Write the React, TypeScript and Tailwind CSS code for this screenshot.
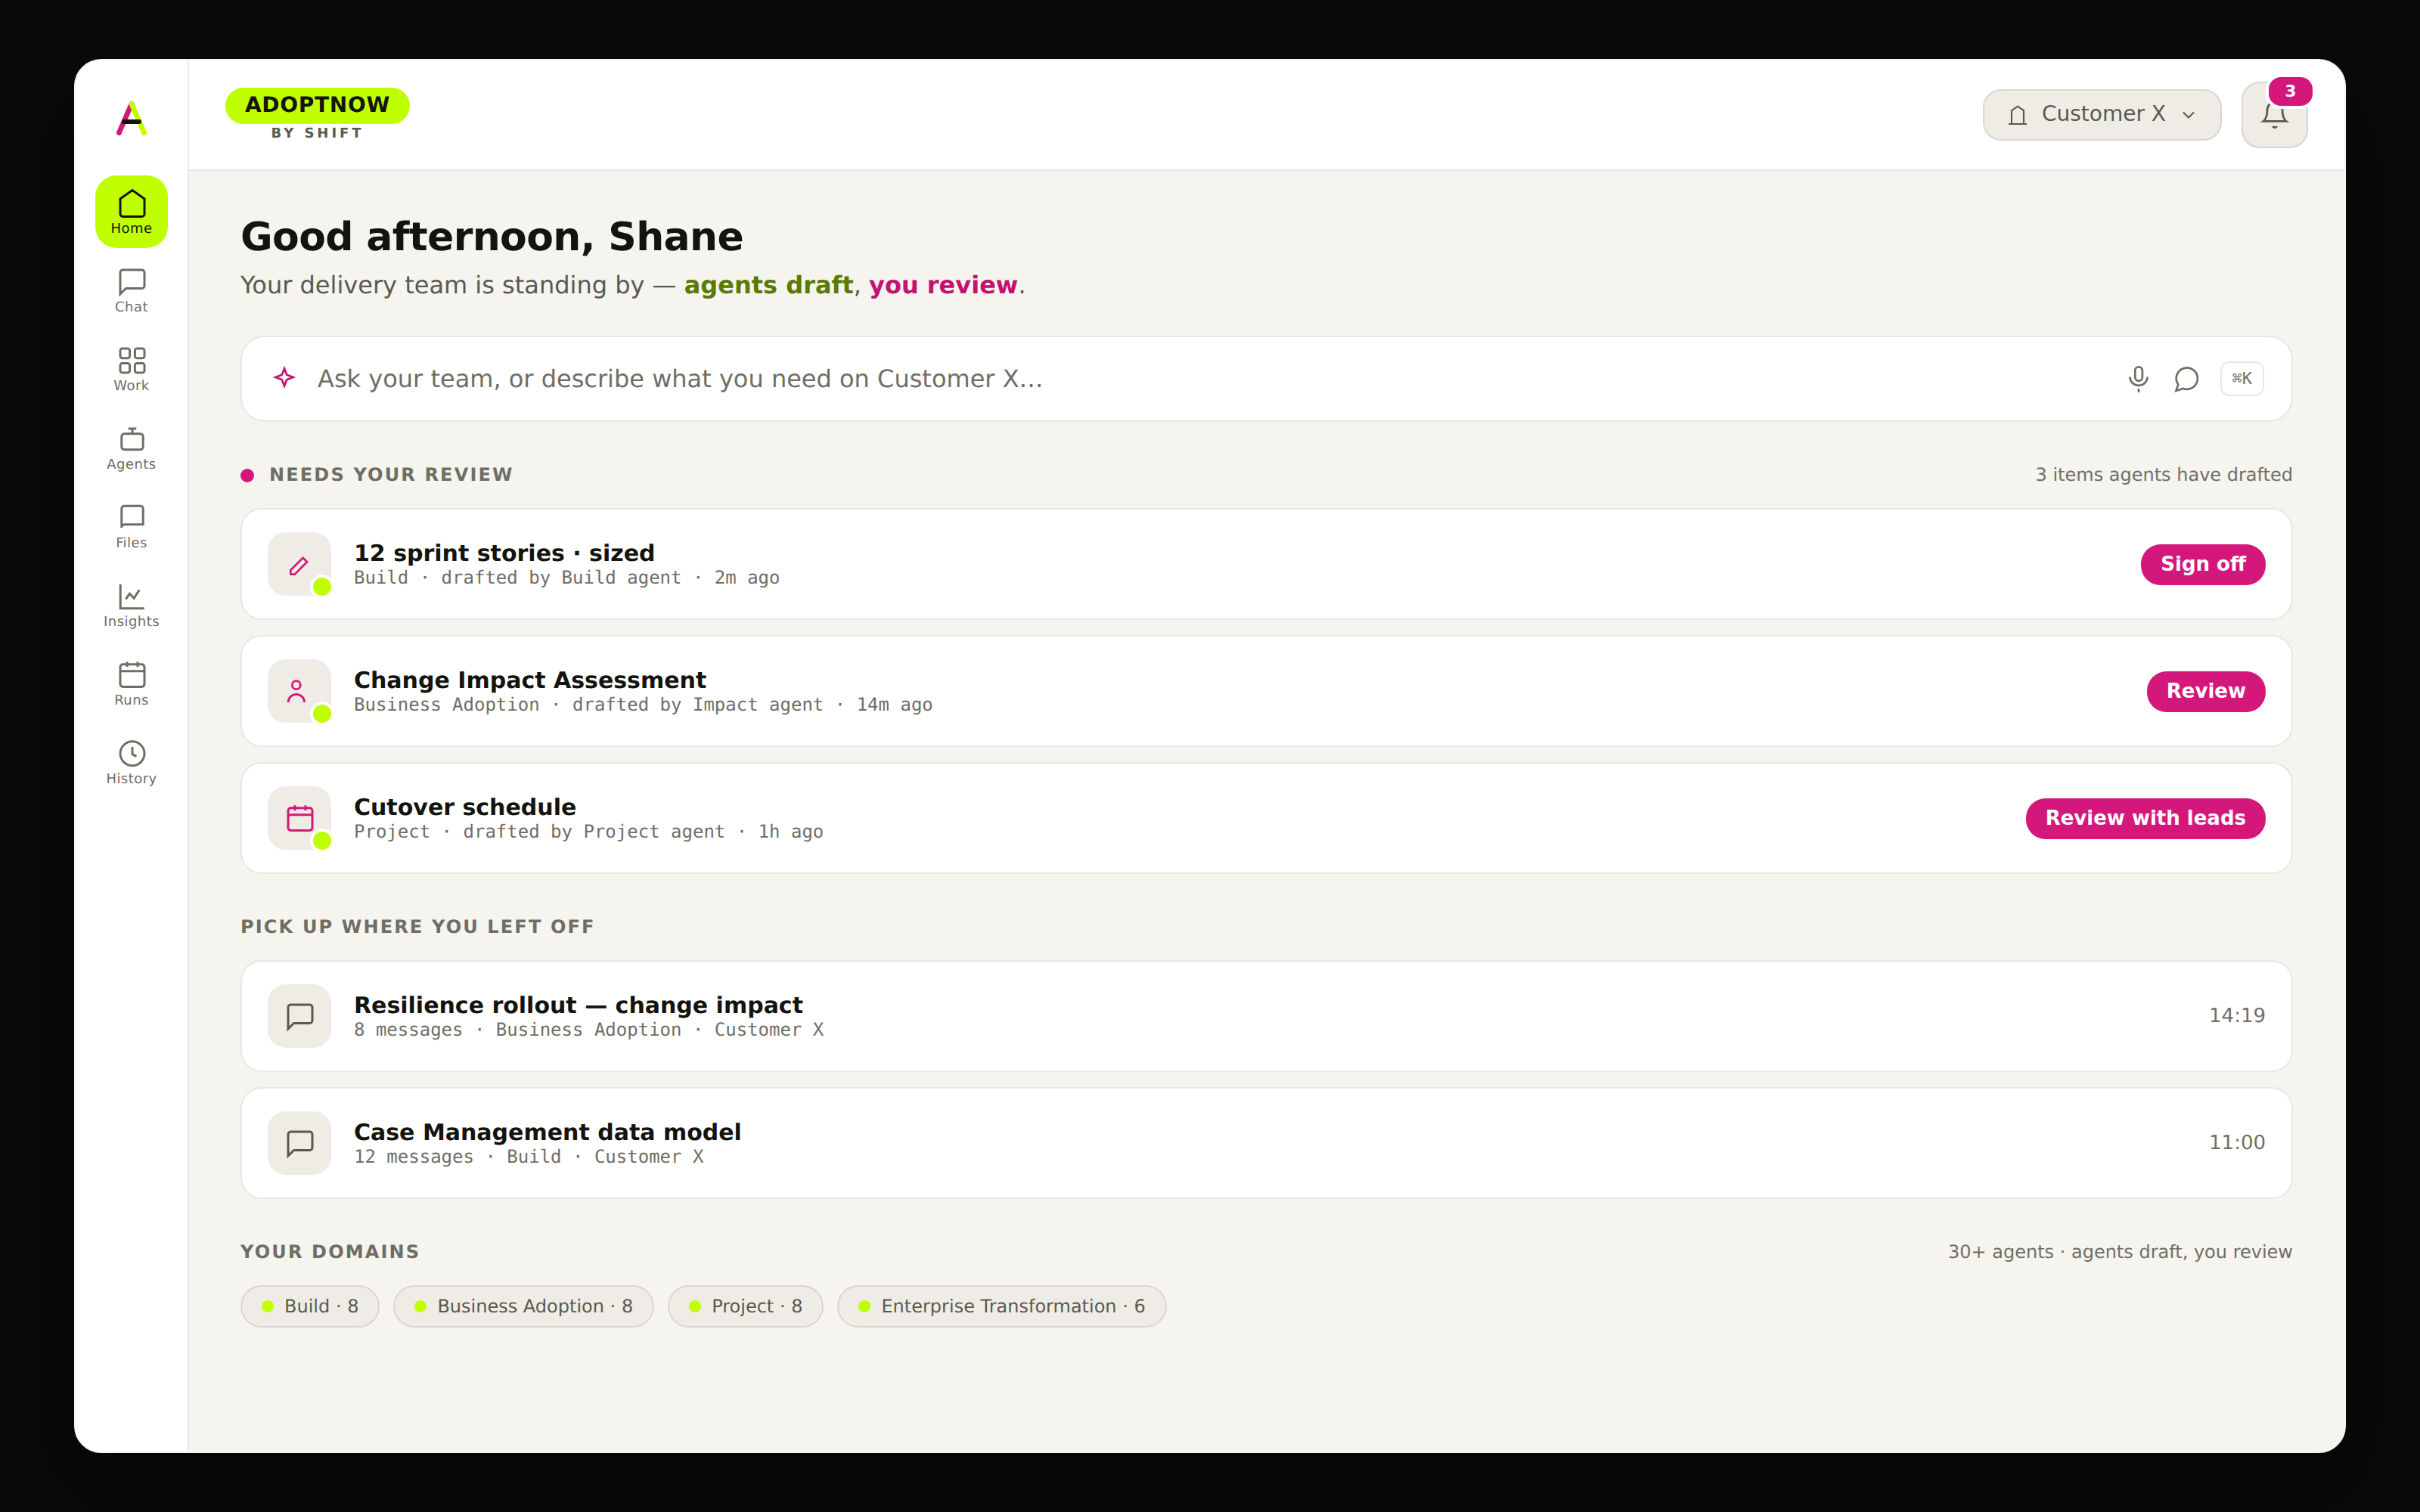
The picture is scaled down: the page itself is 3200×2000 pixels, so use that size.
import type { ReactNode } from "react"

/* ---------- Icons (40px grid) ---------- */

interface IconProps {
  className?: string
  children: ReactNode
}

function Icon({ className = "", children }: IconProps) {
  return (
    <svg
      viewBox="0 0 40 40"
      fill="none"
      stroke="currentColor"
      strokeWidth="3"
      className={`size-10 shrink-0 overflow-visible ${className}`}
    >
      {children}
    </svg>
  )
}

const HomeIcon = () => (
  <Icon>
    <path d="M5 15 21 3.6 37 15v20a3.5 3.5 0 0 1-3.5 3.5h-25A3.5 3.5 0 0 1 5 35z" />
  </Icon>
)

const ChatIcon = () => (
  <Icon>
    <path d="M33.5 29.5h-21L5 37V8.5A3.5 3.5 0 0 1 8.5 5h25A3.5 3.5 0 0 1 37 8.5V26a3.5 3.5 0 0 1-3.5 3.5z" />
  </Icon>
)

const WorkIcon = () => (
  <Icon>
    <rect x="5" y="5.1" width="12.6" height="12.6" rx="2.8" />
    <rect x="24.4" y="5.1" width="12.6" height="12.6" rx="2.8" />
    <rect x="5" y="24.4" width="12.6" height="12.6" rx="2.8" />
    <rect x="24.4" y="24.4" width="12.6" height="12.6" rx="2.8" />
  </Icon>
)

const AgentsIcon = () => (
  <Icon>
    <rect x="6.8" y="13.8" width="28.4" height="21" rx="3.8" />
    <path d="M15.7 7h10.6M21 7v7" />
  </Icon>
)

const FilesIcon = () => (
  <Icon>
    <path d="M6.8 34V8.8a3.6 3.6 0 0 1 3.6-3.6h21.2a3.6 3.6 0 0 1 3.6 3.6v21H11A4.2 4.2 0 0 0 6.8 34z" />
  </Icon>
)

const InsightsIcon = () => (
  <Icon>
    <path d="M5.2 5v31.7h31.5M12.3 24.5l5.2-7.2 5.6 6 7.2-11" />
  </Icon>
)

const CalendarIcon = () => (
  <Icon>
    <rect x="5" y="6.8" width="32" height="29.6" rx="3.6" />
    <path d="M5 15.8h32M14 3.3v7M28 3.3v7" />
  </Icon>
)

const HistoryIcon = () => (
  <Icon>
    <circle cx="21" cy="20.8" r="16" />
    <path d="M21 12v9.6l5.4 3" />
  </Icon>
)

const PencilIcon = () => (
  <Icon>
    <path strokeWidth="2.7" d="M8.3 33.7V28L24.6 11.9l5.5 5.4L13.8 33.7z" />
  </Icon>
)

const PersonIcon = () => (
  <Icon>
    <circle cx="15.8" cy="12.2" r="5.5" strokeWidth="2.8" />
    <path strokeWidth="2.8" d="M5.1 35a10.75 10.6 0 0 1 21.5 0" />
  </Icon>
)

const SparkleIcon = () => (
  <Icon className="text-[#c4106e]">
    <path strokeWidth="2.7" d="M20 6.5l3.2 8.3 8.3 3.2-8.3 3.2L20 29.5l-3.2-8.3L8.5 18l8.3-3.2z" />
  </Icon>
)

const MicIcon = () => (
  <Icon>
    <rect x="15.3" y="4.4" width="9.6" height="18.4" rx="4.7" strokeWidth="2.7" />
    <path strokeWidth="2.7" d="M8.3 17.6a11.7 11.2 0 0 0 23.4 0M20 33v5" />
  </Icon>
)

const BubbleIcon = () => (
  <Icon>
    <path strokeWidth="2.7" d="M5.4 36l2.9-8.2A14.1 14.1 0 1 1 15 32.9z" />
  </Icon>
)

const BellIcon = () => (
  <Icon>
    <path
      strokeWidth="2.7"
      d="M30 13.3a10 10 0 0 0-20 0c0 11.7-5 15-5 15h30s-5-3.3-5-15M17.2 35a3.2 3.2 0 0 0 5.6 0"
    />
  </Icon>
)

function LogoMark() {
  return (
    <svg viewBox="0 0 44 48" fill="none" strokeLinecap="round" className="h-12 w-11 shrink-0">
      <path d="M22 5.4 5.4 43.6" stroke="#d4177a" strokeWidth="6.8" />
      <path d="M22 5.4 38.6 43.6" stroke="#bfff00" strokeWidth="6.8" />
      <path d="M12 29h20" stroke="#14140f" strokeWidth="6" />
    </svg>
  )
}

/* ---------- Data ---------- */

const navItems = [
  { label: "Home", icon: <HomeIcon />, active: true },
  { label: "Chat", icon: <ChatIcon /> },
  { label: "Work", icon: <WorkIcon /> },
  { label: "Agents", icon: <AgentsIcon /> },
  { label: "Files", icon: <FilesIcon /> },
  { label: "Insights", icon: <InsightsIcon /> },
  { label: "Runs", icon: <CalendarIcon /> },
  { label: "History", icon: <HistoryIcon /> },
]

const reviews = [
  {
    title: "12 sprint stories · sized",
    meta: "Build · drafted by Build agent · 2m ago",
    icon: <PencilIcon />,
    action: "Sign off",
  },
  {
    title: "Change Impact Assessment",
    meta: "Business Adoption · drafted by Impact agent · 14m ago",
    icon: <PersonIcon />,
    action: "Review",
  },
  {
    title: "Cutover schedule",
    meta: "Project · drafted by Project agent · 1h ago",
    icon: <CalendarIcon />,
    action: "Review with leads",
  },
]

const threads = [
  {
    title: "Resilience rollout — change impact",
    meta: "8 messages · Business Adoption · Customer X",
    time: "14:19",
  },
  {
    title: "Case Management data model",
    meta: "12 messages · Build · Customer X",
    time: "11:00",
  },
]

const domains = ["Build · 8", "Business Adoption · 8", "Project · 8", "Enterprise Transformation · 6"]

/* ---------- Page ---------- */

export default function App() {
  return (
    <div className="flex h-[2000px] w-[3200px] overflow-hidden bg-[#0a0a0a] px-[98px] py-[78px] font-['DejaVu_Sans',sans-serif] leading-[normal] text-[#14140f] [text-rendering:geometricPrecision]">
      <div className="flex flex-1 overflow-hidden rounded-[36px] border-2 border-[#f6f5f0] bg-[#f5f4ef] shadow-[0_48px_120px_rgba(0,0,0,0.5)]">
        <Sidebar />
        <div className="flex flex-1 flex-col">
          <TopBar />
          <main className="flex flex-col px-[68px] pt-[58px]">
            <h1 className="h-[60px] text-[52px] leading-[60px] font-bold tracking-[-0.012em]">
              Good afternoon, Shane
            </h1>
            <p className="mt-[14px] mb-[49px] h-[37px] text-[32px] text-[#5a5950]">
              Your delivery team is standing by — <b className="text-[#5a7a00]">agents draft</b>,{" "}
              <b className="text-[#c4106e]">you review</b>.
            </p>

            <AskBar />

            <SectionHeader title="Needs your review" note="3 items agents have drafted" dot />
            <div className="flex flex-col gap-5">
              {reviews.map((r) => (
                <Card key={r.title} title={r.title} meta={r.meta} icon={r.icon} draft>
                  <button className="mt-[2px] h-[54px] rounded-[26px] bg-[#d4177a] px-[26px] pb-[2px] text-[26px] font-bold text-white">
                    {r.action}
                  </button>
                </Card>
              ))}
            </div>

            <SectionHeader title="Pick up where you left off" />
            <div className="flex flex-col gap-5">
              {threads.map((t) => (
                <Card key={t.title} title={t.title} meta={t.meta} icon={<ChatIcon />}>
                  <span className="text-[26px] text-[#6f6e64]">{t.time}</span>
                </Card>
              ))}
            </div>

            <SectionHeader title="Your domains" note="30+ agents · agents draft, you review" />
            <div className="flex gap-[18px]">
              {domains.map((d) => (
                <span
                  key={d}
                  className="flex h-14 items-center gap-[14px] rounded-full border-2 border-[#d8d6d0] bg-[#efece6] px-[26px] text-[24px] text-[#5a5950]"
                >
                  <span className="size-4 rounded-full bg-[#bfff00]" />
                  {d}
                </span>
              ))}
            </div>
          </main>
        </div>
      </div>
    </div>
  )
}

function Sidebar() {
  return (
    <aside className="flex w-[150px] shrink-0 flex-col items-center border-r-2 border-[#e7e7e5] bg-white pt-[52px]">
      <LogoMark />
      <nav className="mt-[52px] flex flex-col gap-2">
        {navItems.map((item) => (
          <a
            key={item.label}
            className={`flex size-24 flex-col items-center gap-1 rounded-[28px] pt-4 ${
              item.active ? "bg-[#bfff00] text-[#14140f]" : "text-[#6f6e64]"
            }`}
          >
            {item.icon}
            <span className="text-[18px] leading-[21px] tracking-[0.025em]">{item.label}</span>
          </a>
        ))}
      </nav>
    </aside>
  )
}

function TopBar() {
  return (
    <header className="flex h-[146px] items-center justify-between border-b-2 border-[#e7e7e5] bg-white px-12">
      <div className="flex flex-col items-center gap-1 pb-[2px]">
        <div className="h-12 rounded-full bg-[#bfff00] px-[26px] pt-[6px] text-[28px] leading-[33px] font-bold tracking-[0.025em]">
          ADOPTNOW
        </div>
        <div className="text-[18px] leading-[18px] font-bold tracking-[0.22em] text-[#5a5950]">BY SHIFT</div>
      </div>

      <div className="flex items-center gap-[26px] text-[#5a5950]">
        <button className="flex h-[68px] items-center gap-4 rounded-[24px] border-2 border-[#d8d6d0] bg-[#efece6] px-7 text-[28px]">
          <svg viewBox="0 0 24 24" fill="none" stroke="currentColor" strokeWidth="1.6" className="size-8">
            <path d="M3 21h18M6 21V7.5l6-4 6 4V21" />
          </svg>
          <span className="pb-[3px]">Customer X</span>
          <svg viewBox="0 0 24 24" fill="none" stroke="currentColor" strokeWidth="1.8" className="size-7">
            <path d="m6 9 6 6 6-6" />
          </svg>
        </button>
        <button className="relative flex size-[88px] items-center justify-center rounded-[24px] border-2 border-[#d8d6d0] bg-[#efece6]">
          <BellIcon />
          <span className="absolute -top-3 -right-3 flex h-[46px] w-[66px] items-center justify-center rounded-[20px] border-4 border-white bg-[#d4177a] pb-[2px] text-[22px] font-bold text-white">
            3
          </span>
        </button>
      </div>
    </header>
  )
}

function AskBar() {
  return (
    <div className="flex h-[114px] items-center gap-6 rounded-[32px] border-2 border-[#e7e7e5] bg-white px-9 text-[#6f6e64]">
      <SparkleIcon />
      <span className="flex-1 text-[32px]">Ask your team, or describe what you need on Customer X…</span>
      <MicIcon />
      <BubbleIcon />
      <kbd className="flex h-[46px] items-center rounded-xl border-2 border-[#e7e7e5] px-[14px] font-['DejaVu_Sans_Mono',monospace] text-[22px]">
        ⌘K
      </kbd>
    </div>
  )
}

interface SectionHeaderProps {
  title: string
  note?: string
  dot?: boolean
}

function SectionHeader({ title, note, dot = false }: SectionHeaderProps) {
  return (
    <div className="mt-14 mb-[30px] flex h-7 items-center text-[24px] leading-7 text-[#6f6e64]">
      {dot && <span className="mt-[2px] mr-5 size-[18px] rounded-full bg-[#d4177a]" />}
      <h2 className="flex-1 font-bold tracking-[0.09em] uppercase">{title}</h2>
      {note && <span>{note}</span>}
    </div>
  )
}

interface CardProps {
  title: string
  meta: string
  icon: ReactNode
  draft?: boolean
  children: ReactNode
}

function Card({ title, meta, icon, draft = false, children }: CardProps) {
  return (
    <div className="flex h-[148px] items-center rounded-[28px] border-2 border-[#e7e7e5] bg-white px-[34px]">
      <div
        className={`relative mr-[30px] flex size-[84px] items-center justify-center rounded-[24px] bg-[#efece6] ${
          draft ? "text-[#d4177a]" : "text-[#5a5950]"
        }`}
      >
        {icon}
        {draft && (
          <span className="absolute -right-1 -bottom-1 size-8 rounded-full border-4 border-white bg-[#bfff00]" />
        )}
      </div>
      <div className="flex flex-1 flex-col">
        <span className="text-[30px] leading-[35px] font-bold">{title}</span>
        <span className="font-['DejaVu_Sans_Mono',monospace] text-[24px] leading-[28px] text-[#6f6e64]">{meta}</span>
      </div>
      {children}
    </div>
  )
}
